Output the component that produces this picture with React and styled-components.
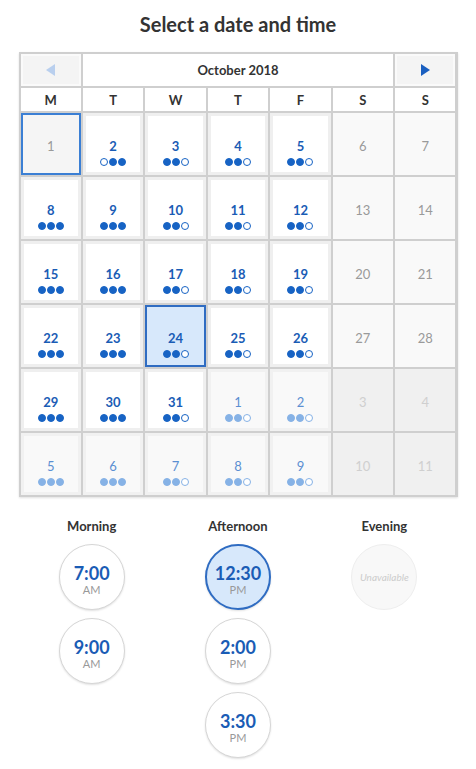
import React from 'react';
import styled, { createGlobalStyle, css } from 'styled-components';

const GlobalStyle = createGlobalStyle`
  body {
    margin: 0;
    background: #fff;
    font-family: Lato, "Open Sans", "Liberation Sans", sans-serif;
    color: #333;
  }
`;

const weekdays = ['M', 'T', 'W', 'T', 'F', 'S', 'S'];

// kind: past | open | weekend | nextOpen | nextWeekend
// dots: string of f (full) / o (open)
const days = [
  { n: 1, kind: 'past' },
  { n: 2, kind: 'open', dots: 'off' },
  { n: 3, kind: 'open', dots: 'ffo' },
  { n: 4, kind: 'open', dots: 'ffo' },
  { n: 5, kind: 'open', dots: 'ffo' },
  { n: 6, kind: 'weekend' },
  { n: 7, kind: 'weekend' },
  { n: 8, kind: 'open', dots: 'fff' },
  { n: 9, kind: 'open', dots: 'fff' },
  { n: 10, kind: 'open', dots: 'ffo' },
  { n: 11, kind: 'open', dots: 'ffo' },
  { n: 12, kind: 'open', dots: 'ffo' },
  { n: 13, kind: 'weekend' },
  { n: 14, kind: 'weekend' },
  { n: 15, kind: 'open', dots: 'fff' },
  { n: 16, kind: 'open', dots: 'fff' },
  { n: 17, kind: 'open', dots: 'ffo' },
  { n: 18, kind: 'open', dots: 'ffo' },
  { n: 19, kind: 'open', dots: 'ffo' },
  { n: 20, kind: 'weekend' },
  { n: 21, kind: 'weekend' },
  { n: 22, kind: 'open', dots: 'fff' },
  { n: 23, kind: 'open', dots: 'fff' },
  { n: 24, kind: 'open', dots: 'ffo', selected: true },
  { n: 25, kind: 'open', dots: 'ffo' },
  { n: 26, kind: 'open', dots: 'ffo' },
  { n: 27, kind: 'weekend' },
  { n: 28, kind: 'weekend' },
  { n: 29, kind: 'open', dots: 'fff' },
  { n: 30, kind: 'open', dots: 'fff' },
  { n: 31, kind: 'open', dots: 'ffo' },
  { n: 1, kind: 'nextOpen', dots: 'ffo' },
  { n: 2, kind: 'nextOpen', dots: 'ffo' },
  { n: 3, kind: 'nextWeekend' },
  { n: 4, kind: 'nextWeekend' },
  { n: 5, kind: 'nextOpen', dots: 'fff' },
  { n: 6, kind: 'nextOpen', dots: 'fff' },
  { n: 7, kind: 'nextOpen', dots: 'ffo' },
  { n: 8, kind: 'nextOpen', dots: 'ffo' },
  { n: 9, kind: 'nextOpen', dots: 'ffo' },
  { n: 10, kind: 'nextWeekend' },
  { n: 11, kind: 'nextWeekend' },
];

const periods = [
  { label: 'Morning', slots: [{ t: '7:00', m: 'AM' }, { t: '9:00', m: 'AM' }] },
  { label: 'Afternoon', slots: [{ t: '12:30', m: 'PM', selected: true }, { t: '2:00', m: 'PM' }, { t: '3:30', m: 'PM' }] },
  { label: 'Evening', slots: [], unavailable: true },
];

const Arrow = ({ dir, color }) => (
  <svg width="9" height="12" viewBox="0 0 9 12">
    {dir === 'left' ? (
      <polygon points="9,0 9,12 0,6" fill={color} />
    ) : (
      <polygon points="0,0 0,12 9,6" fill={color} />
    )}
  </svg>
);

const App = () => (
  <Page>
    <GlobalStyle />
    <Title>Select a date and time</Title>
    <Calendar>
      <NavButton>
        <Arrow dir="left" color="#b9cfee" />
      </NavButton>
      <MonthLabel>October 2018</MonthLabel>
      <NavButton>
        <Arrow dir="right" color="#1a5fc0" />
      </NavButton>
      {weekdays.map((d, i) => (
        <Weekday key={i}>{d}</Weekday>
      ))}
      {days.map((d, i) => (
        <DayCell key={i} kind={d.kind} selected={d.selected}>
          <DayNum kind={d.kind}>{d.n}</DayNum>
          {d.dots && (
            <Dots>
              {d.dots.split('').map((c, j) => (
                <Dot key={j} full={c === 'f'} faded={d.kind === 'nextOpen'} />
              ))}
            </Dots>
          )}
        </DayCell>
      ))}
    </Calendar>
    <Times>
      {periods.map((p) => (
        <Period key={p.label}>
          <PeriodLabel>{p.label}</PeriodLabel>
          {p.unavailable ? (
            <Unavailable>Unavailable</Unavailable>
          ) : (
            p.slots.map((s) => (
              <Slot key={s.t} selected={s.selected}>
                <SlotTime>{s.t}</SlotTime>
                <SlotMeridiem>{s.m}</SlotMeridiem>
              </Slot>
            ))
          )}
        </Period>
      ))}
    </Times>
  </Page>
);

const Page = styled.div`
  width: 439px;
  margin: 0 auto;
  padding: 12px 0 20px;
`;

const Title = styled.h1`
  margin: 0 0 16px;
  text-align: center;
  font-size: 20px;
  line-height: 24px;
  font-weight: 700;
  color: #333;
`;

const Calendar = styled.div`
  display: grid;
  grid-template-columns: repeat(7, 1fr);
  grid-template-rows: 32px 23px repeat(6, 62px);
  gap: 2px;
  padding: 2px;
  background: #cfcfcf;
  box-shadow: 0 1px 2px rgba(0, 0, 0, 0.12);
`;

const NavButton = styled.div`
  display: flex;
  align-items: center;
  justify-content: center;
  background: #f4f4f4;
  box-shadow: inset 0 0 0 2px #fafafa;
`;

const MonthLabel = styled.div`
  grid-column: span 5;
  display: flex;
  align-items: center;
  justify-content: center;
  background: #fff;
  font-size: 13px;
  font-weight: 700;
  color: #333;
`;

const Weekday = styled.div`
  display: flex;
  align-items: center;
  justify-content: center;
  background: #fff;
  font-size: 13px;
  font-weight: 700;
  color: #333;
`;

const cellStyles = {
  past: css`
    background: #f5f5f5;
    box-shadow: inset 0 0 0 2px #3b7fd4;
  `,
  open: css`
    background: #fff;
    box-shadow: inset 0 0 0 3px #efefef;
  `,
  weekend: css`
    background: #f9f9f9;
  `,
  nextOpen: css`
    background: #f9f9f9;
    box-shadow: inset 0 0 0 3px #f1f1f1;
  `,
  nextWeekend: css`
    background: #f0f0f0;
  `,
};

const DayCell = styled.div`
  display: flex;
  flex-direction: column;
  align-items: center;
  padding-top: 25px;
  box-sizing: border-box;
  ${(p) => cellStyles[p.kind]}
  ${(p) =>
    p.selected &&
    css`
      background: #d7e8fb;
      box-shadow: inset 0 0 0 2px #2f6cc2;
    `}
`;

const numColors = {
  past: '#9a9a9a',
  open: '#1a5cb5',
  weekend: '#9a9a9a',
  nextOpen: '#5b8fd2',
  nextWeekend: '#cfcfcf',
};

const DayNum = styled.div`
  font-size: 13px;
  line-height: 16px;
  font-weight: ${(p) => (p.kind === 'open' ? 700 : 400)};
  color: ${(p) => numColors[p.kind]};
`;

const Dots = styled.div`
  display: flex;
  gap: 1px;
  margin-top: 4px;
`;

const Dot = styled.span`
  width: 8px;
  height: 8px;
  box-sizing: border-box;
  border-radius: 50%;
  border: 1px solid ${(p) => (p.faded ? '#86b2e6' : '#1763c4')};
  background: ${(p) => (p.full ? (p.faded ? '#86b2e6' : '#1763c4') : '#fff')};
`;

const Times = styled.div`
  display: grid;
  grid-template-columns: repeat(3, 1fr);
  margin-top: 21px;
`;

const Period = styled.div`
  display: flex;
  flex-direction: column;
  align-items: center;
  gap: 8px;
`;

const PeriodLabel = styled.div`
  font-size: 13px;
  line-height: 16px;
  font-weight: 700;
  color: #333;
  margin-bottom: 2px;
`;

const Slot = styled.div`
  width: 66px;
  height: 66px;
  box-sizing: border-box;
  border-radius: 50%;
  display: flex;
  flex-direction: column;
  align-items: center;
  justify-content: center;
  padding-top: 3px;
  background: ${(p) => (p.selected ? '#d7e8fb' : '#fff')};
  border: ${(p) => (p.selected ? '2px solid #2f6cc2' : '1px solid #d6d6d6')};
  box-shadow: 0 1px 2px rgba(0, 0, 0, 0.12);
`;

const SlotTime = styled.div`
  font-size: 18px;
  line-height: 22px;
  font-weight: 700;
  color: #1a5cb5;
`;

const SlotMeridiem = styled.div`
  font-size: 11px;
  line-height: 13px;
  margin-top: -1px;
  color: #999;
`;

const Unavailable = styled.div`
  width: 66px;
  height: 66px;
  box-sizing: border-box;
  border-radius: 50%;
  display: flex;
  align-items: center;
  justify-content: center;
  background: #f8f8f8;
  border: 1px solid #eeeeee;
  font-size: 10px;
  font-style: italic;
  color: #cccccc;
`;

export default App;
